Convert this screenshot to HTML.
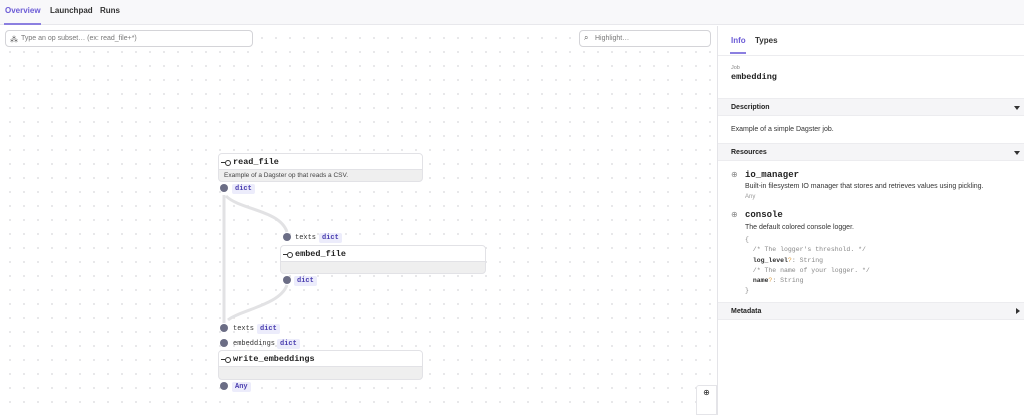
<!DOCTYPE html><html><head><style>
*{box-sizing:border-box;margin:0;padding:0}
body{width:1024px;height:415px;overflow:hidden;font-family:"Liberation Sans",sans-serif;background:#fff;position:relative;color:#222}
.a{position:absolute}
.mono{font-family:"Liberation Mono",monospace}
.top{left:0;top:0;width:1024px;height:25px;background:#f8f8fa;border-bottom:1px solid #e8e8ec}
.tab{top:6px;font-size:8px;font-weight:bold;color:#333}
.canvas{left:0;top:26px;width:717px;height:389px;background-image:radial-gradient(circle,#d4d4d8 0.7px,transparent 0.9px);background-size:14px 14px;background-position:3px 5px}
.inp{border:1px solid #d4d4d8;border-radius:4px;background:#fff;height:17px;font-size:7px;color:#777;padding:4px 0 0 15px}
.node{border:1px solid #e2e2e6;border-radius:4px;background:#efefef;overflow:hidden}
.nh{background:#fff;height:16px;border-bottom:1px solid #e2e2e6;font-family:"Liberation Mono",monospace;font-size:8.5px;font-weight:bold;padding:3px 0 0 14px;position:relative}
.nh:before{content:"";position:absolute;left:6px;top:6px;width:4px;height:4px;border:1px solid #333;border-radius:50%}
.nh:after{content:"";position:absolute;left:2px;top:8px;width:4px;height:1px;background:#333}
.dot{width:8px;height:8px;border-radius:50%;background:#6b6d85}
.lb{font-family:"Liberation Mono",monospace;font-size:7px;color:#333}
.tg{font-family:"Liberation Mono",monospace;font-size:7px;color:#4b3fb0;background:#ececfb;padding:1px 3px;border-radius:2px;font-weight:bold}
.panel{left:717px;top:26px;width:307px;height:389px;border-left:1px solid #e4e4e8;background:#fff}
.band{left:718px;width:306px;height:18px;background:#f5f5f7;border-top:1px solid #ececef;border-bottom:1px solid #ececef;font-size:7px;font-weight:bold;padding:5px 0 0 13px}
.band.dn:after{content:"";position:absolute;right:4px;top:7px;border-left:3px solid transparent;border-right:3px solid transparent;border-top:4px solid #333}
.t7{font-size:7px;color:#333}
.code{font-family:"Liberation Mono",monospace;font-size:6.5px;color:#888}
</style></head><body>
<div class="a top"></div>
<div class="a tab" style="left:5px;color:#6b5bd6">Overview</div>
<div class="a" style="left:4px;top:23px;width:37px;height:2px;background:#8b7fe0"></div>
<div class="a tab" style="left:50px">Launchpad</div>
<div class="a tab" style="left:100px">Runs</div>
<div class="a canvas"></div>
<div class="a inp" style="left:5px;top:30px;width:248px">Type an op subset… (ex: read_file+*)</div>
<div class="a" style="left:10px;top:35px;font-size:8px;color:#444">⁂</div>
<div class="a inp" style="left:579px;top:30px;width:132px">Highlight…</div>
<div class="a" style="left:584px;top:33px;font-size:8px;color:#555">⌕</div>
<svg class="a" style="left:0;top:0" width="717" height="415"><g fill="none" stroke="#e2e2e4" stroke-width="3">
<path d="M224 195 L224 323"/><path d="M226 196 C240 210 280 210 287 232"/><path d="M287 285 C280 305 240 310 228 320"/></g></svg>
<div class="a node" style="left:218px;top:153px;width:205px;height:29px"><div class="nh">read_file</div><div style="font-size:6.5px;color:#444;padding:2px 0 0 5px">Example of a Dagster op that reads a CSV.</div></div>
<div class="a dot" style="left:220px;top:184px"></div><div class="a tg" style="left:232px;top:184px">dict</div>
<div class="a dot" style="left:283px;top:233px"></div><div class="a lb" style="left:295px;top:234px">texts</div><div class="a tg" style="left:319px;top:233px">dict</div>
<div class="a node" style="left:280px;top:245px;width:206px;height:29px"><div class="nh">embed_file</div></div>
<div class="a dot" style="left:283px;top:276px"></div><div class="a tg" style="left:294px;top:276px">dict</div>
<div class="a dot" style="left:220px;top:324px"></div><div class="a lb" style="left:233px;top:325px">texts</div><div class="a tg" style="left:257px;top:324px">dict</div>
<div class="a dot" style="left:220px;top:339px"></div><div class="a lb" style="left:233px;top:340px">embeddings</div><div class="a tg" style="left:277px;top:339px">dict</div>
<div class="a node" style="left:218px;top:350px;width:205px;height:30px"><div class="nh">write_embeddings</div></div>
<div class="a dot" style="left:220px;top:382px"></div><div class="a tg" style="left:232px;top:382px">Any</div>
<div class="a" style="left:696px;top:385px;width:21px;height:30px;background:#fff;border:1px solid #e4e4e8;border-radius:3px 0 0 0;font-size:8px;text-align:center;padding-top:2px">⊕</div>
<div class="a panel"></div>
<div class="a tab" style="left:731px;top:36px;color:#6b5bd6">Info</div>
<div class="a" style="left:730px;top:52px;width:16px;height:2px;background:#8b7fe0"></div>
<div class="a tab" style="left:755px;top:36px">Types</div>
<div class="a" style="left:718px;top:55px;width:306px;height:1px;background:#ececef"></div>
<div class="a" style="left:731px;top:65px;font-size:5.5px;color:#888">Job</div>
<div class="a mono" style="left:731px;top:72px;font-size:8.5px;font-weight:bold">embedding</div>
<div class="a band dn" style="top:98px">Description</div>
<div class="a t7" style="left:731px;top:126px">Example of a simple Dagster job.</div>
<div class="a band dn" style="top:143px">Resources</div>
<div class="a" style="left:731px;top:170px;font-size:8px;color:#888">⊕</div>
<div class="a mono" style="left:745px;top:170px;font-size:9px;font-weight:bold">io_manager</div>
<div class="a t7" style="left:745px;top:183px">Built-in filesystem IO manager that stores and retrieves values using pickling.</div>
<div class="a" style="left:745px;top:194px;font-size:6px;color:#999">Any</div>
<div class="a" style="left:731px;top:210px;font-size:8px;color:#888">⊕</div>
<div class="a mono" style="left:745px;top:210px;font-size:9px;font-weight:bold">console</div>
<div class="a t7" style="left:745px;top:224px">The default colored console logger.</div>
<div class="a code" style="left:745px;top:235px;line-height:10.3px">{<br>&nbsp;&nbsp;/* The logger's threshold. */<br>&nbsp;&nbsp;<b style="color:#333">log_level</b><span style="color:#e0a040">?</span>: String<br>&nbsp;&nbsp;/* The name of your logger. */<br>&nbsp;&nbsp;<b style="color:#333">name</b><span style="color:#e0a040">?</span>: String<br>}</div>
<div class="a band" style="top:302px">Metadata</div>
<div class="a" style="left:1016px;top:308px;border-top:3px solid transparent;border-bottom:3px solid transparent;border-left:4px solid #333"></div>
</body></html>
